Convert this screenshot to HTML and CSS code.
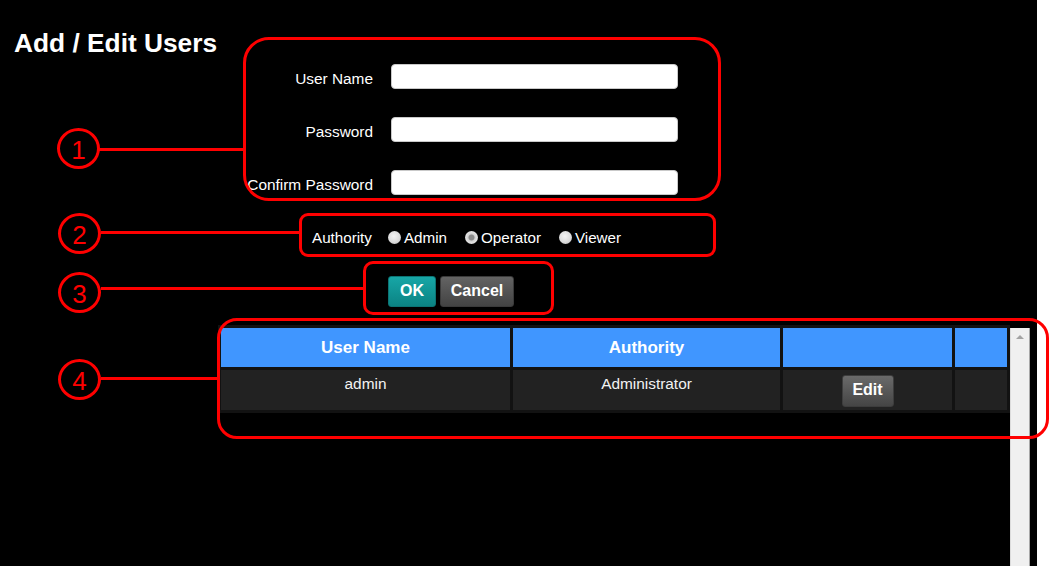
FILE: index.html
```html
<!DOCTYPE html>
<html lang="en">
<head>
<meta charset="utf-8">
<title>Add / Edit Users</title>
<link rel="stylesheet" href="styles.css">
</head>
<body>
<div class="screen">
  <div class="app">
    <h1 class="title">Add / Edit Users</h1>

    <div class="form">
      <label class="field-label">User Name</label>
      <input class="field-input" type="text">
      <label class="field-label">Password</label>
      <input class="field-input" type="password">
      <label class="field-label">Confirm Password</label>
      <input class="field-input" type="password">
    </div>

    <div class="authority">
      <span class="auth-label">Authority</span>
      <label class="opt"><span class="radio"></span>Admin</label>
      <label class="opt"><span class="radio checked"></span>Operator</label>
      <label class="opt"><span class="radio"></span>Viewer</label>
    </div>

    <div class="actions">
      <button class="btn btn-ok">OK</button>
      <button class="btn btn-cancel">Cancel</button>
    </div>

    <div class="list">
      <table class="users">
        <colgroup>
          <col class="c1"><col class="c2"><col class="c3"><col class="c4">
        </colgroup>
        <thead>
          <tr><th>User Name</th><th>Authority</th><th></th><th></th></tr>
        </thead>
        <tbody>
          <tr>
            <td><div class="cell">admin</div></td>
            <td><div class="cell">Administrator</div></td>
            <td><div class="cell"><button class="btn btn-edit">Edit</button></div></td>
            <td><div class="cell"></div></td>
          </tr>
        </tbody>
      </table>
      <div class="scrollbar"><span class="arrow"></span></div>
    </div>
  </div>

  <div class="callouts">
    <div class="box box1"></div>
    <div class="box box2"></div>
    <div class="box box3"></div>
    <div class="box box4"></div>

    <div class="leader lead1"></div>
    <div class="leader lead2"></div>
    <div class="leader lead3"></div>
    <div class="leader lead4"></div>

    <div class="num num1">1</div>
    <div class="num num2">2</div>
    <div class="num num3">3</div>
    <div class="num num4">4</div>
  </div>
</div>
</body>
</html>
```

FILE: styles.css
```css
* { box-sizing: border-box; }

html, body {
  margin: 0;
  padding: 0;
  background: #fff;
}

body {
  font-family: "Liberation Sans", Arial, sans-serif;
  color: #fff;
}

.screen {
  position: relative;
  width: 1056px;
  height: 566px;
  overflow: hidden;
  background: #fff;
}

.app {
  width: 1037px;
  height: 566px;
  background: #000;
  overflow: hidden;
  padding-top: 28px;
}

.title {
  margin: 0 0 0 14px;
  font-size: 26.3px;
  line-height: 30px;
  font-weight: bold;
  color: #fff;
}

/* ---- form ---- */
.form {
  margin-top: 6px;
  margin-left: 173px;
  display: grid;
  grid-template-columns: 200px 287px;
  column-gap: 18px;
  row-gap: 28px;
  align-items: center;
}

.field-label {
  text-align: right;
  font-size: 15.4px;
  line-height: 17px;
  color: #fff;
  padding-top: 3px;
}

.field-input {
  height: 25px;
  width: 287px;
  margin: 0;
  border: 1px solid #c9c9c9;
  border-radius: 4px;
  background: #fff;
}

/* ---- authority ---- */
.authority {
  margin-top: 32px;
  margin-left: 312px;
  height: 20px;
  display: flex;
  align-items: center;
  font-size: 15.2px;
  line-height: 17px;
}

.auth-label {
  margin-right: 16px;
}

.opt {
  display: flex;
  align-items: center;
  gap: 3px;
  margin-right: 18px;
}

.radio {
  display: inline-block;
  width: 13px;
  height: 13px;
  border-radius: 50%;
  background: radial-gradient(circle at 45% 40%, #f4f4f4 0, #dcdcdc 55%, #b8b8b8 100%);
}

.radio.checked {
  background: radial-gradient(circle at 50% 50%, #8a8a8a 0, #8a8a8a 2.6px, #cfcfcf 3.4px, #e2e2e2 60%, #b8b8b8 100%);
}

/* ---- buttons ---- */
.actions {
  margin-top: 29px;
  margin-left: 388px;
  display: flex;
  gap: 4px;
}

.btn {
  font-family: "Liberation Sans", Arial, sans-serif;
  font-weight: bold;
  font-size: 16px;
  color: #fff;
  border-radius: 3px;
  padding: 0 0 2px;
  margin: 0;
  cursor: pointer;
}

.btn-ok {
  width: 48px;
  height: 31px;
  border: 1px solid #0b7474;
  background: linear-gradient(#17a6a6, #0b8383);
}

.btn-cancel {
  width: 74px;
  height: 31px;
  border: 1px solid #3a3a3a;
  background: linear-gradient(#636363, #434343);
}

.btn-edit {
  width: 52px;
  height: 32px;
  border: 1px solid #3d3d3d;
  background: linear-gradient(#6a6a6a, #454545);
}

/* ---- table ---- */
.list {
  margin-top: 18px;
  margin-left: 218px;
  display: flex;
  align-items: flex-start;
}

.users {
  width: 792px;
  table-layout: fixed;
  border-collapse: separate;
  border-spacing: 3px;
  background: #121212;
  font-size: 15.4px;
}

.c1 { width: 289px; }
.c2 { width: 267px; }
.c3 { width: 169px; }
.c4 { width: 52px; }

.users th {
  height: 39px;
  padding: 0;
  background: #4096ff;
  color: #fff;
  font-size: 17px;
  font-weight: bold;
  text-align: center;
  vertical-align: middle;
}

.users td {
  padding: 0;
  background: #222;
  vertical-align: top;
  text-align: center;
}

.cell {
  height: 40px;
  padding-top: 5px;
  line-height: 17px;
  color: #f2f2f2;
}

.scrollbar {
  margin-top: 3px;
  width: 20px;
  height: 238px;
  background: #f0f0f0;
  border-left: 1px solid #dcdcdc;
  border-right: 1px solid #a8a8a8;
  display: flex;
  justify-content: center;
  padding-top: 7px;
}

.arrow {
  width: 0;
  height: 0;
  border-left: 4px solid transparent;
  border-right: 4px solid transparent;
  border-bottom: 4px solid #a3a3a3;
}

/* ---- annotation overlay ---- */
.callouts {
  position: absolute;
  inset: 0;
  pointer-events: none;
}

.box {
  position: absolute;
  border: 3px solid #f00;
}

.box1 { left: 243px; top: 37px;  width: 478px; height: 164px; border-radius: 26px; }
.box2 { left: 299px; top: 213px; width: 417px; height: 44px;  border-radius: 9px; }
.box3 { left: 363px; top: 261px; width: 191px; height: 54px;  border-radius: 10px; }
.box4 { left: 217px; top: 318px; width: 832px; height: 121px; border-radius: 20px; }

.leader {
  position: absolute;
  height: 3px;
  background: #f00;
}

.lead1 { left: 99px;  top: 148px; width: 146px; }
.lead2 { left: 101px; top: 231px; width: 200px; }
.lead3 { left: 101px; top: 287px; width: 264px; }
.lead4 { left: 101px; top: 377px; width: 118px; }

.num {
  position: absolute;
  width: 43px;
  height: 41px;
  border: 3px solid #f00;
  border-radius: 50%;
  color: #f00;
  font-family: "Liberation Sans", Arial, sans-serif;
  font-size: 26px;
  line-height: 39px;
  text-align: center;
  background: #000;
}

.num1 { left: 57px; top: 128px; }
.num2 { left: 58px; top: 213px; }
.num3 { left: 58px; top: 272px; }
.num4 { left: 58px; top: 359px; }
```
